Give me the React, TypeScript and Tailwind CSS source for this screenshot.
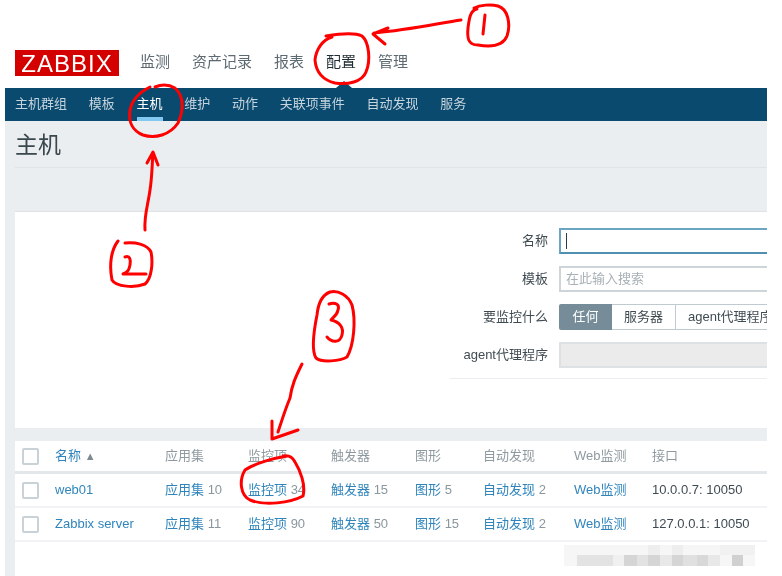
const font = '"Liberation Sans", "Noto Sans CJK SC", sans-serif';

const top = ['监测', '资产记录', '报表', '配置', '管理'];
const sub = ['主机群组', '模板', '主机', '维护', '动作', '关联项事件', '自动发现', '服务'];
const headers = ['应用集', '监控项', '触发器', '图形', '自动发现', 'Web监测', '接口'];
const rows = [
  { name: 'web01', a: '10', b: '34', c: '15', d: '5', e: '2', ip: '10.0.0.7: 10050' },
  { name: 'Zabbix server', a: '11', b: '90', c: '50', d: '15', e: '2', ip: '127.0.0.1: 10050' },
];
const columns = 'grid grid-cols-[40px_110px_83px_83px_84px_68px_91px_78px_1fr] items-center';

function Check() {
  return <span className="block w-[17px] h-[17px] ml-[7px] rounded-[2px] border-2 border-[#c9d2d7] bg-white" />;
}

function Link({ label, n }: { label: string; n?: string }) {
  return (
    <span className="whitespace-nowrap">
      <span className="text-[#2f85bb]">{label}</span>
      {n ? <span className="text-[#8a979e]"> {n}</span> : null}
    </span>
  );
}

function Label({ children }: { children: string }) {
  return <span className="w-[98px] text-right text-[13px] text-[#3f4b52] whitespace-nowrap">{children}</span>;
}

function Scribbles() {
  return (
    <svg className="absolute inset-0 pointer-events-none" width="782" height="576" viewBox="0 0 782 576" fill="none" stroke="#ff0000" strokeWidth="3" strokeLinecap="round" strokeLinejoin="round">
      <path d="M477 9C470 10 469 20 468 28C467 38 468 45 478 45C490 47 503 46 507 36C511 24 508 9 498 6C491 4 480 5 474 8" />
      <path d="M485 15L483 34" />
      <path d="M461 20C440 23 410 30 374 33M388 28L373 34L385 44" />
      <path d="M332 37C322 40 316 50 315 60C316 72 323 80 335 83C348 85 362 82 366 72C371 60 369 42 362 36C354 32 338 34 326 36" />
      <path d="M150 87C140 92 132 100 130 110C128 122 133 131 143 135C155 139 170 135 178 123C184 110 184 96 175 88C168 84 160 85 155 87" />
      <path d="M145 230C144 215 148 205 150 190C152 178 152 165 153 153M147 163L153 152L158 165" />
      <path d="M118 241C111 250 109 265 112 280C116 287 135 288 145 284C152 278 153 262 151 252C147 244 135 242 125 243" />
      <path d="M125 257C130 255 131 260 130 265C129 270 128 272 123 274L146 274" />
      <path d="M330 292C322 295 318 305 317 315C314 330 311 350 316 358C322 363 340 361 347 357C354 345 356 320 352 305C348 295 338 290 330 292" />
      <path d="M329 304C335 302 340 304 338 310C337 316 332 318 331 320C340 322 344 328 342 335C340 343 332 343 327 337" />
      <path d="M302 364C295 378 292 385 290 398C285 410 282 420 278 432M272 421L272 439L298 430" />
      <path d="M287 456C275 458 255 463 245 470C239 480 240 495 250 500C265 506 290 503 303 496C306 485 300 470 295 462C292 456 288 455 283 456" />
    </svg>
  );
}

function Watermark() {
  const cells: [number, number, number, number, string][] = [
    [564, 545, 191, 21, '#f6f6f6'],
    [577, 555, 36, 11, '#e3e3e3'], [613, 555, 11, 11, '#f0f0f0'], [624, 555, 13, 11, '#d5d5d5'],
    [637, 555, 11, 11, '#e2e2e2'], [648, 555, 12, 11, '#d5d5d5'], [660, 555, 12, 11, '#e8e8e8'],
    [672, 555, 11, 11, '#d5d5d5'], [683, 555, 14, 11, '#e0e0e0'], [697, 555, 11, 11, '#d8d8d8'],
    [708, 555, 12, 11, '#e8e8e8'], [732, 555, 11, 11, '#d0d0d0'],
    [648, 545, 12, 10, '#eeeeee'], [672, 545, 11, 10, '#eeeeee'], [720, 545, 35, 10, '#f1f1f1'],
  ];
  return (
    <svg className="absolute inset-0 pointer-events-none" width="782" height="576" viewBox="0 0 782 576">
      {cells.map(([x, y, w, h, f], i) => (
        <rect key={i} x={x} y={y} width={w} height={h} fill={f} />
      ))}
    </svg>
  );
}

export default function App() {
  return (
    <div className="relative w-[782px] h-[576px] overflow-hidden bg-white blur-[0.6px]" style={{ fontFamily: font }}>
      <div className="ml-[5px] w-[762px] h-full flex flex-col">
        <header className="h-[88px] shrink-0 pl-[10px] pt-[50px] flex items-start">
          <div className="w-[104px] h-[26px] bg-[#d40000] text-white text-[24px] leading-[27px] text-center tracking-[1px]">ZABBIX</div>
          <nav className="ml-[21px] flex gap-[22px] text-[15px] leading-6 text-[#5d6a72]">
            {top.map((t) => (
              <span key={t} className={t === '配置' ? 'text-[#1f2c33]' : ''}>{t}</span>
            ))}
          </nav>
        </header>
        <nav className="relative h-[33px] shrink-0 bg-[#0b4a6f] pl-[10px] flex gap-[21.75px] text-[13px] text-[#c4d3dc]">
          <span className="absolute left-[331px] -top-[7px] w-0 h-0 border-x-[8px] border-x-transparent border-b-[7px] border-b-[#0b4a6f]" />
          {sub.map((t) => (
            <span key={t} className={t === '主机' ? 'relative h-full leading-[31px] text-white border-b-[4px] border-[#82c8f0]' : 'leading-[31px]'}>{t}</span>
          ))}
        </nav>
        <main className="flex-1 bg-[#ebeef0] pl-[10px] flex flex-col">
          <h1 className="h-[47px] pt-[8px] border-b border-[#dfe4e7] text-[23px] leading-[32px] font-normal text-[#3a474e]">主机</h1>
          <section className="mt-[43px] h-[217px] bg-white border-t border-[#dfe3e6] pt-[16px] pl-[435px] overflow-hidden">
            <div className="flex flex-col gap-[12px] w-[317px] text-[13px]">
              <div className="flex items-center gap-[11px] h-[26px]">
                <Label>名称</Label>
                <div className="flex-1 h-[26px] border-2 border-r-0 border-[#6ba5c1] border-b-[#4f8fb0] pl-[5px] flex items-center">
                  <span className="w-px h-[16px] bg-[#2c3a42]" />
                </div>
              </div>
              <div className="flex items-center gap-[11px] h-[26px]">
                <Label>模板</Label>
                <div className="flex-1 h-[26px] border-2 border-r-0 border-[#cdd5d9] pl-[5px] leading-[22px] text-[#a8b1b6]">在此输入搜索</div>
              </div>
              <div className="flex items-center gap-[11px] h-[26px]">
                <Label>要监控什么</Label>
                <div className="flex-1 h-[26px] flex overflow-hidden whitespace-nowrap">
                  <span className="w-[53px] shrink-0 bg-[#768d99] text-white text-center leading-[26px] rounded-l-[2px]">任何</span>
                  <span className="w-[64px] shrink-0 border border-l-0 border-[#bfcbd1] text-center leading-[24px] text-[#3f4b52]">服务器</span>
                  <span className="shrink-0 border-y border-[#bfcbd1] pl-[12px] pr-[14px] leading-[24px] text-[#3f4b52]">agent代理程序</span>
                </div>
              </div>
              <div className="flex items-center gap-[11px] h-[26px]">
                <Label>agent代理程序</Label>
                <div className="flex-1 h-[26px] border-2 border-r-0 border-[#dde1e4] bg-[#ebebeb]" />
              </div>
              <div className="h-px bg-[#ebeef0] -mt-[2px]" />
            </div>
          </section>
          <section className="mt-[13px] flex-1 bg-white text-[13px]">
            <div className={`${columns} h-[33px] border-b-[3px] border-[#e3e7ea] text-[#8f9aa0]`}>
              <Check />
              <span className="text-[#2f85bb]">名称 <span className="text-[11px] text-[#7d8a91]">▲</span></span>
              {headers.map((h) => (
                <span key={h}>{h}</span>
              ))}
            </div>
            {rows.map((r) => (
              <div key={r.name} className={`${columns} h-[34px] border-b-2 border-[#f1f3f4]`}>
                <Check />
                <span className="text-[#2f85bb] whitespace-nowrap">{r.name}</span>
                <Link label="应用集" n={r.a} />
                <Link label="监控项" n={r.b} />
                <Link label="触发器" n={r.c} />
                <Link label="图形" n={r.d} />
                <Link label="自动发现" n={r.e} />
                <Link label="Web监测" />
                <span className="text-[#3f4b52] whitespace-nowrap">{r.ip}</span>
              </div>
            ))}
          </section>
        </main>
      </div>
      <Watermark />
      <Scribbles />
    </div>
  );
}
